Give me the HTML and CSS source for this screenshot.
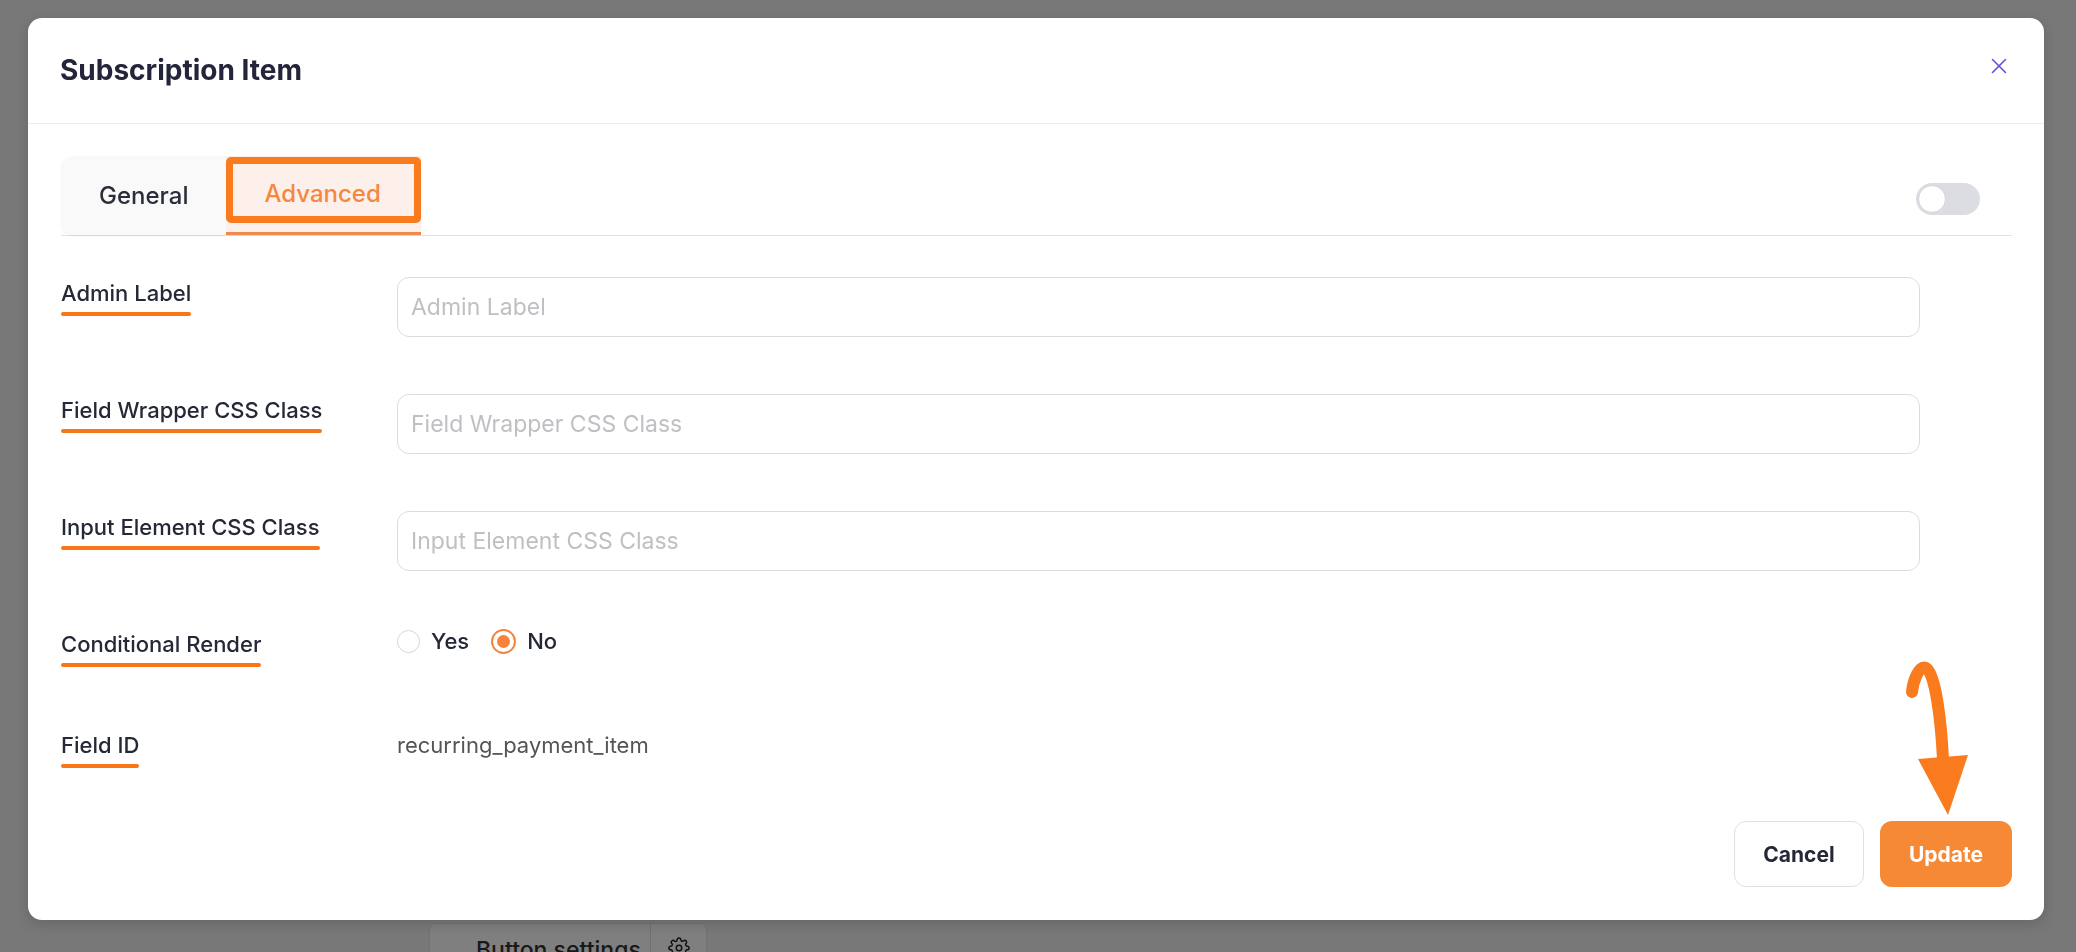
FILE: index.html
```html
<!DOCTYPE html>
<html lang="en">
<head>
  <meta charset="UTF-8">
  <meta name="viewport" content="width=device-width, initial-scale=1.0">
  <title>Subscription Item</title>
  <link rel="stylesheet" href="styles.css">
</head>
<body>
  <!-- Page behind the modal -->
  <div class="page">
    <div class="settings-bar">
      <span class="settings-label">Button settings</span>
      <span class="settings-gear">
        <svg width="22" height="22" viewBox="0 0 24 24" fill="none" stroke="currentColor" stroke-width="1.6" stroke-linecap="round" stroke-linejoin="round">
          <circle cx="12" cy="12" r="3"></circle>
          <path d="M19.4 15a1.65 1.65 0 0 0 .33 1.82l.06.06a2 2 0 1 1-2.83 2.83l-.06-.06a1.65 1.65 0 0 0-1.82-.33 1.65 1.65 0 0 0-1 1.51V21a2 2 0 1 1-4 0v-.09A1.65 1.65 0 0 0 9 19.4a1.65 1.65 0 0 0-1.82.33l-.06.06a2 2 0 1 1-2.83-2.83l.06-.06A1.65 1.65 0 0 0 4.68 15a1.65 1.65 0 0 0-1.51-1H3a2 2 0 1 1 0-4h.09A1.65 1.65 0 0 0 4.6 9a1.65 1.65 0 0 0-.33-1.82l-.06-.06a2 2 0 1 1 2.83-2.83l.06.06A1.65 1.65 0 0 0 9 4.68 1.65 1.65 0 0 0 10 3.17V3a2 2 0 1 1 4 0v.09a1.65 1.65 0 0 0 1 1.51 1.65 1.65 0 0 0 1.82-.33l.06-.06a2 2 0 1 1 2.83 2.83l-.06.06A1.65 1.65 0 0 0 19.4 9a1.65 1.65 0 0 0 1.51 1H21a2 2 0 1 1 0 4h-.09a1.65 1.65 0 0 0-1.51 1z"></path>
        </svg>
      </span>
    </div>
  </div>

  <!-- Overlay -->
  <div class="overlay"></div>

  <!-- Modal -->
  <div class="modal">
    <div class="modal-header">
      <h2 class="modal-title">Subscription Item</h2>
      <button class="modal-close" aria-label="Close">
        <svg width="16" height="16" viewBox="0 0 16 16" fill="none" stroke="#6a4fdc" stroke-width="1.6" stroke-linecap="round">
          <line x1="1.5" y1="1.5" x2="14.5" y2="14.5"></line>
          <line x1="14.5" y1="1.5" x2="1.5" y2="14.5"></line>
        </svg>
      </button>
    </div>

    <div class="modal-body">
      <!-- Tabs -->
      <div class="tabs-bar">
        <div class="tab-list">
          <div class="tab">General</div>
          <div class="tab active">Advanced</div>
        </div>
        <div class="toggle"><span class="toggle-knob"></span></div>
      </div>

      <!-- Form -->
      <div class="form">
        <div class="form-row">
          <div class="field-label"><span>Admin Label</span></div>
          <div class="field-control">
            <input class="text-input" type="text" placeholder="Admin Label">
          </div>
        </div>

        <div class="form-row">
          <div class="field-label"><span>Field Wrapper CSS Class</span></div>
          <div class="field-control">
            <input class="text-input" type="text" placeholder="Field Wrapper CSS Class">
          </div>
        </div>

        <div class="form-row">
          <div class="field-label"><span>Input Element CSS Class</span></div>
          <div class="field-control">
            <input class="text-input" type="text" placeholder="Input Element CSS Class">
          </div>
        </div>

        <div class="form-row row-radio">
          <div class="field-label"><span>Conditional Render</span></div>
          <div class="field-control radio-group">
            <label class="radio"><span class="radio-dot"></span>Yes</label>
            <label class="radio checked"><span class="radio-dot"></span>No</label>
          </div>
        </div>

        <div class="form-row">
          <div class="field-label"><span>Field ID</span></div>
          <div class="field-control field-value">recurring_payment_item</div>
        </div>
      </div>
    </div>

    <!-- Footer -->
    <div class="modal-footer">
      <button class="btn btn-cancel">Cancel</button>
      <button class="btn btn-update">Update</button>
    </div>

    <!-- Arrow annotation -->
    <svg class="arrow" width="80" height="165" viewBox="0 0 80 165" fill="none">
      <path d="M12 33 C 13 22, 19 6, 26 9 C 35 13, 41 60, 43 100" stroke="#fa7a1e" stroke-width="12" stroke-linecap="round" stroke-linejoin="round"></path>
      <polygon points="18,100 68,96 48,156" fill="#fa7a1e"></polygon>
    </svg>
  </div>
</body>
</html>
```

FILE: styles.css
```css
/* Base */
*,
*::before,
*::after {
  box-sizing: border-box;
}

body {
  margin: 0;
  padding: 0;
  font-family: 'Inter', 'Liberation Sans', sans-serif;
  background-color: #f1f1f1;
  color: #242736;
  overflow: hidden;
  height: 952px;
}

/* Page behind the modal */
.page {
  padding-top: 923px;
  padding-left: 429px;
}

.settings-bar {
  display: flex;
  width: 278px;
  height: 40px;
  background-color: #ffffff;
  border-radius: 6px 6px 0 0;
  border: 1px solid #e5e5e5;
}

.settings-label {
  flex: 1;
  padding: 12px 0 0 46px;
  font-size: 23px;
  font-weight: 500;
  color: #333333;
}

.settings-gear {
  width: 56px;
  border-left: 1px solid #e0e0e0;
  display: flex;
  justify-content: center;
  padding-top: 13px;
  color: #222222;
}

/* Overlay */
.overlay {
  position: fixed;
  inset: 0;
  background-color: rgba(0, 0, 0, 0.5);
}

/* Modal */
.modal {
  position: absolute;
  top: 18px;
  left: 28px;
  width: 2016px;
  background-color: #ffffff;
  border-radius: 14px;
  box-shadow: 0 4px 14px rgba(0, 0, 0, 0.15);
}

.modal-header {
  display: flex;
  justify-content: space-between;
  align-items: flex-start;
  padding: 35px 37px 35px 32px;
  border-bottom: 1px solid #ededed;
}

.modal-title {
  margin: 0;
  font-size: 28px;
  line-height: 35px;
  font-weight: 700;
  color: #23263a;
}

.modal-close {
  background: none;
  border: none;
  padding: 0;
  margin-top: 5px;
  cursor: pointer;
  line-height: 0;
}

.modal-body {
  padding: 32px 32px 0 33px;
}

/* Tabs */
.tabs-bar {
  display: flex;
  justify-content: space-between;
  align-items: center;
  height: 80px;
  border-bottom: 1px solid #e2e2e4;
}

.tab-list {
  display: flex;
  height: 79px;
  background-color: #f9f9fa;
  border-radius: 12px 0 0 12px;
  box-shadow: 0 1px 2px rgba(0, 0, 0, 0.06);
}

.tab {
  padding: 0 38px;
  font-size: 24px;
  font-weight: 500;
  line-height: 79px;
  color: #2a2d3a;
}

.tab.active {
  position: relative;
  padding: 0 40px 0 38px;
  background-color: #fdf0eb;
  color: #f5883e;
  border-bottom: 3px solid #f08a4b;
  line-height: 76px;
}

/* Orange highlight box over the active tab */
.tab.active::after {
  content: "";
  position: absolute;
  top: 1px;
  left: 0;
  right: 0;
  height: 66px;
  border: 7px solid #fa7a1e;
  border-radius: 5px;
}

.toggle {
  width: 64px;
  height: 32px;
  margin-right: 32px;
  margin-top: 6px;
  background-color: #dcdde2;
  border-radius: 16px;
  padding: 2px;
}

.toggle-knob {
  display: block;
  width: 28px;
  height: 28px;
  background-color: #ffffff;
  border: 1px solid #d2d3d8;
  border-radius: 50%;
}

/* Form */
.form {
  display: flex;
  flex-direction: column;
  gap: 57px;
  margin-top: 41px;
}

.form-row {
  display: flex;
  align-items: flex-start;
}

.row-radio {
  min-height: 44px;
}

.field-label {
  width: 336px;
  flex-shrink: 0;
}

.field-label span {
  display: inline-block;
  font-size: 22px;
  line-height: 32px;
  font-weight: 500;
  color: #252837;
}

.field-label span::after {
  content: "";
  display: block;
  height: 4px;
  margin-top: 3px;
  border-radius: 2px;
  background-color: #f97618;
}

.field-control {
  flex: 1;
  margin-right: 92px;
}

.text-input {
  width: 100%;
  height: 60px;
  padding: 0 13px;
  border: 1px solid #dcdce0;
  border-radius: 12px;
  font-family: 'Inter', 'Liberation Sans', sans-serif;
  font-size: 23px;
  color: #252837;
  outline: none;
}

.text-input::placeholder {
  color: #bfbfc4;
}

/* Radio buttons */
.radio-group {
  display: flex;
  align-items: center;
  gap: 22px;
  height: 26px;
}

.radio {
  display: flex;
  align-items: center;
  gap: 11px;
  font-size: 22px;
  font-weight: 500;
  color: #242736;
}

.radio-dot {
  width: 23px;
  height: 23px;
  border: 1px solid #d6d6da;
  border-radius: 50%;
  position: relative;
}

.radio.checked .radio-dot {
  width: 25px;
  height: 25px;
  border: 2px solid #f5843a;
}

.radio.checked .radio-dot::after {
  content: "";
  position: absolute;
  top: 4px;
  left: 4px;
  width: 13px;
  height: 13px;
  border-radius: 50%;
  background-color: #f5843a;
}

.field-value {
  font-size: 22px;
  line-height: 32px;
  color: #555559;
}

/* Footer */
.modal-footer {
  display: flex;
  justify-content: flex-end;
  gap: 16px;
  padding: 53px 32px 33px;
}

.btn {
  height: 66px;
  border-radius: 12px;
  font-family: 'Inter', 'Liberation Sans', sans-serif;
  font-size: 21px;
  font-weight: 700;
  cursor: pointer;
}

.btn-cancel {
  width: 130px;
  background-color: #ffffff;
  border: 1px solid #e0e0e4;
  color: #252837;
}

.btn-update {
  width: 132px;
  background-color: #f68936;
  border: none;
  color: #ffffff;
}

/* Arrow annotation */
.arrow {
  position: absolute;
  right: 64px;
  bottom: 96px;
}
```
